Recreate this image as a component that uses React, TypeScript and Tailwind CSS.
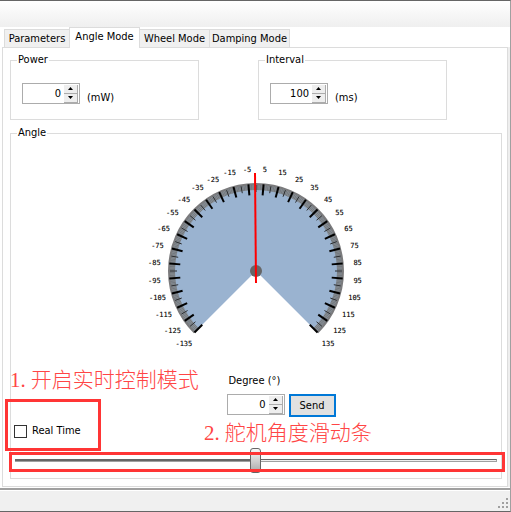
import { useState } from "react";

const CX = 120;
const CY = 111;

function point(angle: number, radius: number) {
  const rad = (angle * Math.PI) / 180;
  return { x: CX + radius * Math.sin(rad), y: CY - radius * Math.cos(rad) };
}

function sector(radius: number) {
  const a = point(-135, radius);
  const b = point(135, radius);
  return `M${CX} ${CY}L${a.x} ${a.y}A${radius} ${radius} 0 1 1 ${b.x} ${b.y}Z`;
}

function arc(radius: number) {
  const a = point(-135, radius);
  const b = point(135, radius);
  return `M${a.x} ${a.y}A${radius} ${radius} 0 1 1 ${b.x} ${b.y}`;
}

function Tick({ angle, from, to, width, color }: { angle: number; from: number; to: number; width: number; color: string }) {
  const a = point(angle, from);
  const b = point(angle, to);
  return <line x1={a.x} y1={a.y} x2={b.x} y2={b.y} stroke={color} strokeWidth={width} />;
}

function Dial() {
  const fine = Array.from({ length: 271 }, (_, i) => i - 135);
  const minor = Array.from({ length: 27 }, (_, i) => i * 10 - 130);
  const major = Array.from({ length: 28 }, (_, i) => i * 10 - 135);
  return (
    <svg viewBox="0 0 240 190" className="mx-auto block h-[190px] w-[240px]" role="img" aria-label="Angle dial">
      <path d={sector(87)} fill="#9ab3d0" />
      <path d={arc(84)} fill="none" stroke="#8f959b" strokeWidth="6" />
      <path d={arc(87)} fill="none" stroke="#7b7b7d" strokeWidth="2" />
      {fine.map((a) => (
        <Tick key={a} angle={a} from={81} to={86} width={0.5} color="#555b60" />
      ))}
      {minor.map((a) => (
        <Tick key={a} angle={a} from={79} to={86} width={1} color="#2b2d30" />
      ))}
      {major.map((a) => (
        <Tick key={a} angle={a} from={76} to={87} width={2} color="#000000" />
      ))}
      <g className="font-['DejaVu_Sans_Mono',monospace] text-[7px]" fill="#000000" stroke="#000000" strokeWidth="0.1" textAnchor="middle">
        {major.map((a) => {
          const p = point(a, 102);
          return (
            <text key={a} x={p.x} y={p.y + 3}>
              {a}
            </text>
          );
        })}
      </g>
      <circle cx={CX} cy={CY} r="6" fill="#666666" />
      <line x1={CX - 1} y1={CY - 98} x2={CX} y2={CY + 12} stroke="#ff0000" strokeWidth="2" />
    </svg>
  );
}

function Spinner({ id, initial, min, max }: { id: string; initial: number; min: number; max: number }) {
  const [value, setValue] = useState(initial);
  const step = (d: number) => setValue((v) => Math.min(max, Math.max(min, v + d)));
  const button = "flex h-[9px] w-[14px] items-center justify-center border-r border-b border-[#acacac] bg-[#eeeeee]";
  return (
    <div className="flex h-[21px] w-[58px] items-center border border-[#acacac] bg-white pr-px">
      <input
        id={id}
        type="number"
        value={value}
        onChange={(e) => setValue(Number(e.target.value))}
        className="h-full min-w-0 flex-1 appearance-none pr-[3px] pb-px text-right outline-none [-moz-appearance:textfield] [&::-webkit-inner-spin-button]:appearance-none"
      />
      <div className="flex flex-col">
        <button type="button" aria-label="Increase" className={button} onClick={() => step(1)}>
          <svg viewBox="0 0 5 3" className="h-[3px] w-[5px]"><path d="M0 3L2.500 0L5 3Z" /></svg>
        </button>
        <button type="button" aria-label="Decrease" className={button} onClick={() => step(-1)}>
          <svg viewBox="0 0 5 3" className="h-[3px] w-[5px]"><path d="M0 0L2.500 3L5 0Z" /></svg>
        </button>
      </div>
    </div>
  );
}

function SettingGroup({ title, id, initial, unit }: { title: string; id: string; initial: number; unit: string }) {
  return (
    <fieldset className="h-[67px] w-[189px] border border-[#dcdcdc] pt-4 pl-[11px]">
      <legend className="-ml-[5px] h-[14px] px-[1px] leading-[14px]">{title}</legend>
      <div className="flex items-start gap-[7px]">
        <Spinner id={id} initial={initial} min={0} max={9999} />
        <label htmlFor={id} className="pt-2 leading-[14px]">
          {unit}
        </label>
      </div>
    </fieldset>
  );
}

const tabs = [
  { name: "Parameters", width: "w-[65px]" },
  { name: "Angle Mode", width: "w-[71px]" },
  { name: "Wheel Mode", width: "w-[70px]" },
  { name: "Damping Mode", width: "w-[80px]" },
];

export default function App() {
  const [angle, setAngle] = useState(0);
  const [realTime, setRealTime] = useState(false);
  return (
    <div className="flex min-h-screen flex-col border-y border-r border-t-[#666666] border-r-[#a0a0a0] border-b-[#666666] bg-white font-['DejaVu_Sans_Condensed','DejaVu_Sans',sans-serif] text-[11px] leading-[14px] text-black">
      <header className="h-[26px] bg-linear-to-b from-white to-[#efefef]" />
      <main className="flex flex-col border-b-2 border-[#a0a0a0] pr-[2px] pb-px pl-[2px]">
        <div role="tablist" className="z-10 -mb-px flex h-[21px] items-end pl-[2px]">
          {tabs.map((t, i) => (
            <button
              key={t.name}
              type="button"
              role="tab"
              aria-selected={i === 1}
              className={
                i === 1
                  ? `${t.width} h-[21px] border border-b-0 border-[#dcdcdc] bg-white pb-[2px] whitespace-nowrap`
                  : `${t.width} flex h-[19px] items-center justify-center border border-[#dcdcdc] bg-[#f0f0f0] whitespace-nowrap ${i === 0 ? "border-r-0" : "border-l-0"}`
              }
            >
              {t.name}
            </button>
          ))}
        </div>
        <section className="border border-[#dcdcdc] pt-[5px] pr-[5px] pb-[7px] pl-[7px] shadow-[2px_0_0_#eeeeee]">
          <div className="grid grid-cols-2 gap-1">
            <SettingGroup title="Power" id="power" initial={0} unit="(mW)" />
            <SettingGroup title="Interval" id="interval" initial={100} unit="(ms)" />
          </div>
          <fieldset className="relative mt-[6px] min-w-0 border border-[#dcdcdc] px-1 pt-[20px] pb-[6px]">
            <legend className="ml-[2px] h-[14px] px-[1px] leading-[14px]">Angle</legend>
            <Dial />
            <div className="mx-auto mt-6 flex w-[159px] flex-col pl-[50px]">
              <label htmlFor="degree" className="pl-[2px]">
                Degree (°)
              </label>
              <div className="mt-[6px] flex justify-between">
                <Spinner id="degree" initial={0} min={-135} max={135} />
                <button type="button" className="h-[23px] w-[47px] border-2 border-[#0078d7] bg-[#e1e1e1]">
                  Send
                </button>
              </div>
            </div>
            <label className="mt-[7px] -ml-px flex w-fit items-center gap-[5px]">
              <input
                type="checkbox"
                checked={realTime}
                onChange={(e) => setRealTime(e.target.checked)}
                className="size-[13px] appearance-none border border-[#333333] bg-white checked:bg-[#333333]"
              />
              Real Time
            </label>
            <input
              type="range"
              aria-label="Angle"
              min={-135}
              max={135}
              value={angle}
              onChange={(e) => setAngle(Number(e.target.value))}
              className="mt-[10px] block h-6 w-full appearance-none bg-transparent [&::-webkit-slider-runnable-track]:h-[3px] [&::-webkit-slider-runnable-track]:border-t [&::-webkit-slider-runnable-track]:border-r [&::-webkit-slider-runnable-track]:border-b [&::-webkit-slider-runnable-track]:border-t-[#666666] [&::-webkit-slider-runnable-track]:border-r-[#a0a0a0] [&::-webkit-slider-runnable-track]:border-b-[#a0a0a0] [&::-webkit-slider-runnable-track]:bg-[linear-gradient(to_right,#666666_50%,#eeeeee_50%)] [&::-webkit-slider-thumb]:-mt-3 [&::-webkit-slider-thumb]:h-[25px] [&::-webkit-slider-thumb]:w-[11px] [&::-webkit-slider-thumb]:appearance-none [&::-webkit-slider-thumb]:rounded-[3px] [&::-webkit-slider-thumb]:border [&::-webkit-slider-thumb]:border-[#666666] [&::-webkit-slider-thumb]:bg-[linear-gradient(to_bottom,#f8f8f8,#aaaaaa)]"
            />
            <div className="pointer-events-none absolute bottom-[27px] -left-[6px] h-[52px] w-[96px] border-3 border-[#ff3535]" />
            <div className="pointer-events-none absolute -right-[4px] bottom-[6px] -left-[2px] h-5 border-3 border-[#ff3535]" />
            <p className="pointer-events-none absolute bottom-[86px] -left-[1px] flex gap-[5px] font-['Liberation_Serif','Noto_Sans_CJK_SC',serif] text-[21px] leading-[24px] font-light whitespace-nowrap text-[#ff4545]">
              <span>1.</span>
              <span>开启实时控制模式</span>
            </p>
            <p className="pointer-events-none absolute bottom-[33px] left-[193px] flex gap-[5px] font-['Liberation_Serif','Noto_Sans_CJK_SC',serif] text-[21px] leading-[24px] font-light whitespace-nowrap text-[#ff4545]">
              <span>2.</span>
              <span>舵机角度滑动条</span>
            </p>
          </fieldset>
        </section>
      </main>
      <footer className="mt-px flex flex-1 items-end justify-end bg-[#f0f0f0] pr-[2px] pb-[3px]">
        <svg viewBox="0 0 10 10" className="size-[10px]" fill="#a0a0a0">
          <path d="M8 0h2v2h-2zM4 4h2v2h-2zM8 4h2v2h-2zM0 8h2v2h-2zM4 8h2v2h-2zM8 8h2v2h-2z" />
        </svg>
      </footer>
    </div>
  );
}
